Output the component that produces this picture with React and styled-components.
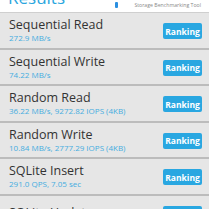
import React from "react";
import styled, { createGlobalStyle } from "styled-components";

const GlobalStyle = createGlobalStyle`
  html, body {
    margin: 0;
    padding: 0;
    background: #e6e6e6;
    overflow: hidden;
  }
  body {
    font-family: "Open Sans", "Noto Sans", sans-serif;
  }
`;

const Page = styled.div`
  width: 209px;
  height: 209px;
  overflow: hidden;
  background: #e6e6e6;
`;

const Header = styled.div`
  height: 12px;
  background: #ffffff;
  border-bottom: 1px solid #cfcfcf;
  display: flex;
  align-items: flex-end;
  padding: 0 8px;
  overflow: hidden;
`;

const HeaderTitle = styled.div`
  font-size: 17px;
  line-height: 17px;
  color: #2ba6de;
  margin-bottom: 6px;
  flex: 1;
`;

const Brand = styled.div`
  display: flex;
  align-items: center;
  gap: 16px;
  align-self: flex-start;
  margin-top: 1px;
`;

const BrandIcon = styled.div`
  width: 3px;
  height: 6px;
  border-radius: 1px;
  background: #2b8fe0;
`;

const BrandText = styled.div`
  font-size: 5.2px;
  color: #8a8a8a;
  white-space: nowrap;
`;

const Row = styled.div`
  height: 34.5px;
  border-bottom: 2px solid #bcbcbc;
  display: flex;
  align-items: center;
  padding: 0 7px 0 9px;
`;

const Info = styled.div`
  flex: 1;
  display: flex;
  flex-direction: column;
`;

const Title = styled.div`
  font-size: 12.5px;
  line-height: 16px;
  color: #333333;
`;

const Value = styled.div`
  font-size: 8px;
  line-height: 10px;
  color: #45ade0;
  white-space: nowrap;
`;

const RankButton = styled.button`
  width: 39px;
  height: 16px;
  border: none;
  border-radius: 2px;
  background: #29a7e1;
  color: #ffffff;
  font-family: "Open Sans", "Noto Sans", sans-serif;
  font-weight: 700;
  font-size: 8.5px;
  padding: 0;
  margin-top: 2px;
`;

const results = [
  { title: "Sequential Read", value: "272.9 MB/s" },
  { title: "Sequential Write", value: "74.22 MB/s" },
  { title: "Random Read", value: "36.22 MB/s, 9272.82 IOPS (4KB)" },
  { title: "Random Write", value: "10.84 MB/s, 2777.29 IOPS (4KB)" },
  { title: "SQLite Insert", value: "291.0 QPS, 7.05 sec" },
  { title: "SQLite Update", value: "" },
];

export default function App() {
  return (
    <Page>
      <GlobalStyle />
      <Header>
        <HeaderTitle>Results</HeaderTitle>
        <Brand>
          <BrandIcon />
          <BrandText>Storage Benchmarking Tool</BrandText>
        </Brand>
      </Header>
      {results.map((r) => (
        <Row key={r.title}>
          <Info>
            <Title>{r.title}</Title>
            <Value>{r.value}</Value>
          </Info>
          <RankButton>Ranking</RankButton>
        </Row>
      ))}
    </Page>
  );
}
